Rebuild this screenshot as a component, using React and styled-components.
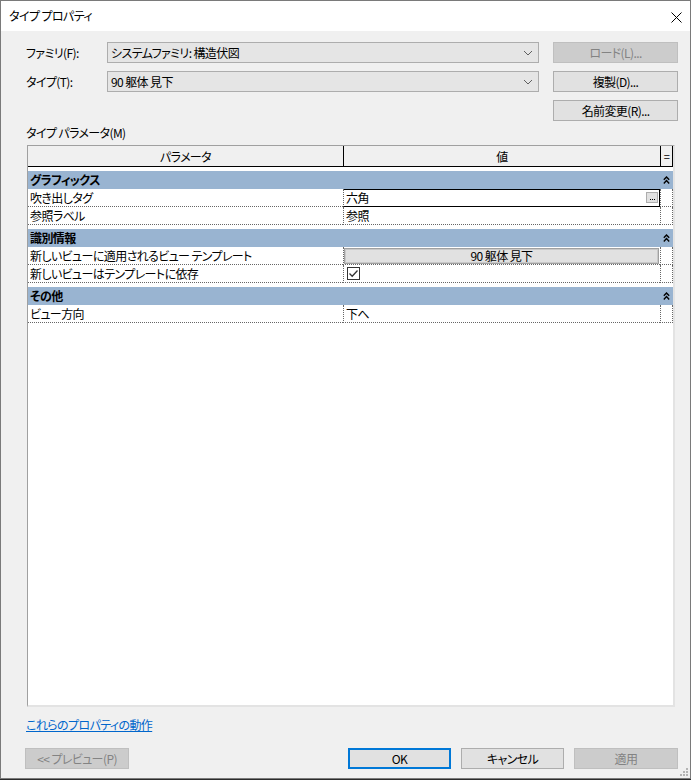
import styled, { createGlobalStyle } from "styled-components";

const GlobalStyle = createGlobalStyle`
  html, body {
    margin: 0;
    padding: 0;
    background: #2b2b2b;
  }
  body {
    font-family: "Noto Sans CJK JP", "Noto Sans", sans-serif;
    font-size: 12px;
    color: #000;
    font-feature-settings: "palt" 1;
    letter-spacing: -0.6px;
  }
`;

const Window = styled.div`
  position: relative;
  width: 691px;
  height: 779px;
  box-sizing: border-box;
  border: 1px solid #7a7a7a;
  background: #f0f0f0;
  display: flex;
  flex-direction: column;
`;

const TitleBar = styled.div`
  height: 30px;
  flex-shrink: 0;
  background: #fff;
  display: flex;
  align-items: center;
  justify-content: space-between;
  padding: 0 4px 0 8px;
`;

const Title = styled.span`
  line-height: 16px;
`;

const CloseButton = styled.div`
  width: 20px;
  height: 20px;
  display: flex;
  align-items: center;
  justify-content: center;
  margin-top: 2px;
`;

const Body = styled.div`
  flex: 1;
  display: flex;
  flex-direction: column;
  padding: 11px 12px 9px 24px;
  min-height: 0;
`;

const Form = styled.div`
  display: flex;
  flex-direction: column;
  gap: 8px;
`;

const FormRow = styled.div`
  display: flex;
  align-items: center;
  height: 21px;
`;

const Label = styled.span`
  width: 82px;
  padding-left: 1px;
  box-sizing: border-box;
  line-height: 16px;
`;

const Combo = styled.div`
  width: 432px;
  height: 21px;
  box-sizing: border-box;
  border: 1px solid #adadad;
  background: #e5e5e5;
  display: flex;
  align-items: center;
  justify-content: space-between;
  padding: 0 5px 0 3px;
`;

const Spacer = styled.div`
  flex: 1;
`;

const Button = styled.div`
  width: ${(p) => p.$w || 125}px;
  height: 21px;
  box-sizing: border-box;
  display: flex;
  align-items: center;
  justify-content: center;
  background: ${(p) => (p.$disabled ? "#cccccc" : "#e1e1e1")};
  border: ${(p) =>
    p.$default ? "2px solid #0078d7" : p.$disabled ? "1px solid #bfbfbf" : "1px solid #adadad"};
  color: ${(p) => (p.$disabled ? "#838383" : "#000")};
  line-height: 16px;
`;

const SectionLabel = styled.div`
  margin-top: 4px;
  line-height: 16px;
  padding-left: 1px;
`;

const Frame = styled.div`
  flex: 1;
  margin: 4px 3px 0 2px;
  background: #fff;
  border-top: 1px solid #a0a0a0;
  border-left: 1px solid #a0a0a0;
  border-right: 2px solid #e3e3e3;
  border-bottom: 2px solid #e3e3e3;
  overflow: hidden;
`;

const cols = "315px 317px 13px";

const Header = styled.div`
  display: grid;
  grid-template-columns: ${cols};
  height: 21px;
  box-sizing: border-box;
  border-bottom: 1px solid #000;
  background: #f0f0f0;
`;

const HeaderCell = styled.div`
  display: flex;
  align-items: center;
  justify-content: center;
  border-left: ${(p) => (p.$first ? "none" : "1px solid #000")};
  border-right: ${(p) => (p.$last ? "1px solid #000" : "none")};
  font-size: ${(p) => (p.$small ? "11px" : "12px")};
`;

const Category = styled.div`
  display: grid;
  grid-template-columns: ${cols};
  height: 18px;
  margin-top: 4px;
  background: #99b4d1;
  font-weight: bold;
  line-height: 18px;
`;

const CategoryName = styled.div`
  grid-column: 1 / 3;
  padding-left: 2px;
`;

const Collapse = styled.div`
  display: flex;
  align-items: center;
  justify-content: center;
`;

const Row = styled.div`
  display: grid;
  grid-template-columns: ${cols};
  height: 18px;
`;

const NameCell = styled.div`
  border-bottom: 1px dotted #666;
  padding-left: 2px;
  line-height: 17px;
  white-space: nowrap;
`;

const ValueCell = styled.div`
  position: relative;
  border-left: 1px dotted #666;
  border-bottom: ${(p) => (p.$editing ? "1px solid #000" : "1px dotted #666")};
  box-shadow: ${(p) => (p.$editing ? "inset 0 1px 0 #000, inset -1px 0 0 #000" : "none")};
  padding-left: ${(p) => (p.$bare ? 0 : 2)}px;
  line-height: 17px;
  display: flex;
  align-items: center;
  justify-content: space-between;
  white-space: nowrap;
`;

const EqCell = styled.div`
  border-left: 1px dotted #666;
  border-right: 1px dotted #666;
  border-bottom: 1px dotted #666;
`;

const BrowseButton = styled.div`
  width: 12px;
  height: 11px;
  box-sizing: border-box;
  margin-right: 2px;
  background: #e1e1e1;
  border: 1px solid #adadad;
  display: flex;
  align-items: flex-end;
  justify-content: center;
  gap: 1px;
  padding-bottom: 2px;
`;

const Dot = styled.span`
  width: 1px;
  height: 1px;
  background: #000;
`;

const TemplateButton = styled.div`
  flex: 1;
  height: 16px;
  margin: 1px 1px 0 0;
  box-sizing: border-box;
  background: #e1e1e1;
  border: 1px solid #a0a0a0;
  box-shadow: inset 0 0 0 1px #c9c9c9;
  display: flex;
  align-items: center;
  justify-content: center;
  line-height: 14px;
`;

const CheckBox = styled.div`
  width: 13px;
  height: 13px;
  box-sizing: border-box;
  margin-left: 3px;
  border: 1px solid #333;
  background: #fff;
  display: flex;
  align-items: center;
  justify-content: center;
`;

const HelpLink = styled.a`
  align-self: flex-start;
  margin-top: 10px;
  line-height: 16px;
  padding-left: 1px;
  color: #0066cc;
  text-decoration: underline;
  cursor: pointer;
`;

const ButtonRow = styled.div`
  display: flex;
  gap: 10px;
  margin-top: 15px;
`;

const Grip = styled.svg`
  position: absolute;
  right: 1px;
  bottom: 1px;
`;

const ChevronDown = () => (
  <svg width="10" height="6" viewBox="0 0 10 6">
    <polyline points="1,1 5,5 9,1" fill="none" stroke="#606060" strokeWidth="1" />
  </svg>
);

const DoubleUp = () => (
  <svg width="7" height="8" viewBox="0 0 7 8">
    <polyline points="0.8,3.8 3.5,1 6.2,3.8" fill="none" stroke="#000" strokeWidth="1.4" />
    <polyline points="0.8,7.4 3.5,4.6 6.2,7.4" fill="none" stroke="#000" strokeWidth="1.4" />
  </svg>
);

const CloseIcon = () => (
  <svg width="11" height="11" viewBox="0 0 11 11">
    <line x1="0.5" y1="0.5" x2="10.5" y2="10.5" stroke="#000" strokeWidth="1" />
    <line x1="10.5" y1="0.5" x2="0.5" y2="10.5" stroke="#000" strokeWidth="1" />
  </svg>
);

const CheckMark = () => (
  <svg width="11" height="11" viewBox="0 0 11 11">
    <polyline points="1.5,5.5 4.2,8.2 9.5,2.5" fill="none" stroke="#333" strokeWidth="1.3" />
  </svg>
);

const grips = [
  [6, 0],
  [3, 3],
  [6, 3],
  [0, 6],
  [3, 6],
  [6, 6],
];

const sections = [
  {
    name: "グラフィックス",
    rows: [
      { name: "吹き出しタグ", value: "六角", editing: true },
      { name: "参照ラベル", value: "参照" },
    ],
  },
  {
    name: "識別情報",
    rows: [
      { name: "新しいビューに適用されるビュー テンプレート", button: "90 躯体 見下" },
      { name: "新しいビューはテンプレートに依存", check: true },
    ],
  },
  {
    name: "その他",
    rows: [{ name: "ビュー方向", value: "下へ" }],
  },
];

const renderValue = (row) => {
  if (row.button) {
    return (
      <ValueCell $bare>
        <TemplateButton>{row.button}</TemplateButton>
      </ValueCell>
    );
  }
  if (row.check) {
    return (
      <ValueCell $bare>
        <CheckBox>
          <CheckMark />
        </CheckBox>
      </ValueCell>
    );
  }
  return (
    <ValueCell $editing={row.editing}>
      <span>{row.value}</span>
      {row.editing && (
        <BrowseButton>
          <Dot />
          <Dot />
          <Dot />
        </BrowseButton>
      )}
    </ValueCell>
  );
};

export default function App() {
  return (
    <>
      <GlobalStyle />
      <Window>
        <TitleBar>
          <Title>タイプ プロパティ</Title>
          <CloseButton>
            <CloseIcon />
          </CloseButton>
        </TitleBar>
        <Body>
          <Form>
            <FormRow>
              <Label>ファミリ(F):</Label>
              <Combo>
                <span>システムファミリ: 構造伏図</span>
                <ChevronDown />
              </Combo>
              <Spacer />
              <Button $disabled>ロード(L)...</Button>
            </FormRow>
            <FormRow>
              <Label>タイプ(T):</Label>
              <Combo>
                <span>90 躯体 見下</span>
                <ChevronDown />
              </Combo>
              <Spacer />
              <Button>複製(D)...</Button>
            </FormRow>
            <FormRow>
              <Spacer />
              <Button>名前変更(R)...</Button>
            </FormRow>
          </Form>
          <SectionLabel>タイプ パラメータ(M)</SectionLabel>
          <Frame>
            <Header>
              <HeaderCell $first>パラメータ</HeaderCell>
              <HeaderCell>値</HeaderCell>
              <HeaderCell $last $small>=</HeaderCell>
            </Header>
            {sections.map((s) => (
              <div key={s.name}>
                <Category>
                  <CategoryName>{s.name}</CategoryName>
                  <Collapse>
                    <DoubleUp />
                  </Collapse>
                </Category>
                {s.rows.map((r) => (
                  <Row key={r.name}>
                    <NameCell>{r.name}</NameCell>
                    {renderValue(r)}
                    <EqCell />
                  </Row>
                ))}
              </div>
            ))}
          </Frame>
          <HelpLink>これらのプロパティの動作</HelpLink>
          <ButtonRow>
            <Button $w={104} $disabled>
              &lt;&lt; プレビュー(P)
            </Button>
            <Spacer />
            <Button $w={103} $default>
              OK
            </Button>
            <Button $w={103}>キャンセル</Button>
            <Button $w={104} $disabled>
              適用
            </Button>
          </ButtonRow>
        </Body>
        <Grip width="9" height="9" viewBox="0 0 9 9">
          {grips.map(([x, y]) => (
            <rect key={`${x}-${y}`} x={x} y={y} width="2" height="2" fill="#b4b4b4" />
          ))}
        </Grip>
      </Window>
    </>
  );
}
